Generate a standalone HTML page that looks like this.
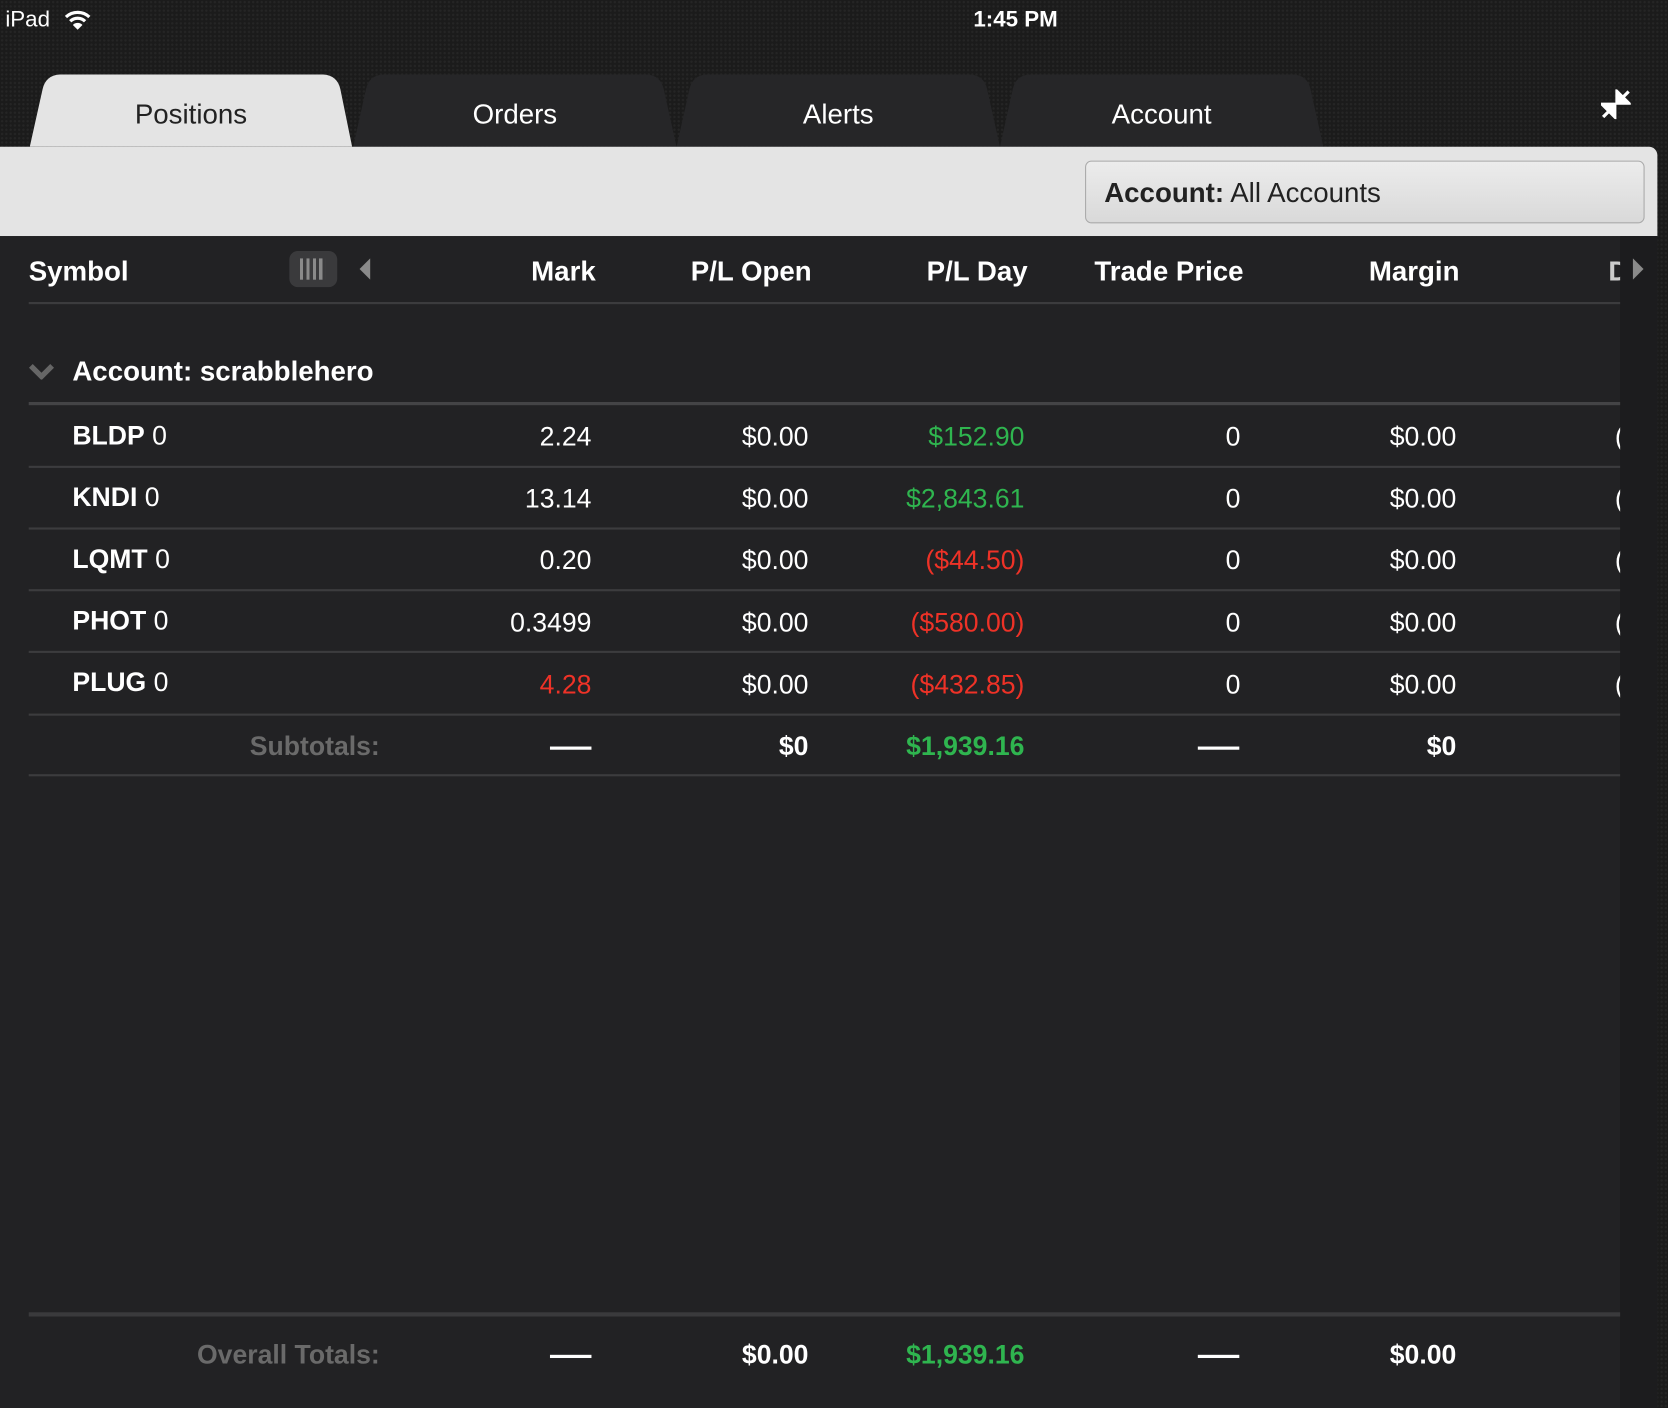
<!DOCTYPE html>
<html><head><meta charset="utf-8"><style>
html,body{margin:0;padding:0;width:1668px;height:1408px;overflow:hidden;background:#1a1a1a;}
#w{position:absolute;left:0;top:0;width:1568px;height:1324px;transform:scale(1.06378,1.06344);transform-origin:0 0;
font-family:"Liberation Sans",Arial,sans-serif;color:#fff;
background-color:#1b1b1b;background-image:radial-gradient(#252525 1px,transparent 1px);background-size:4px 4px;}
.a{position:absolute;white-space:nowrap;}
.tab{position:absolute;top:70px;height:68px;}
.tab svg{position:absolute;left:0;top:0}
.tab span{position:absolute;left:0;right:0;top:22px;text-align:center;font-size:26px;}
.r{position:absolute;text-align:right;white-space:nowrap;font-size:25px;}
.hd{font-weight:bold;font-size:26px;}
.line{position:absolute;left:27px;width:1496px;height:2px;background:#3c3c3e;}
.g{color:#2fb54f}.red{color:#ee3227}
</style></head><body><div id="w">
<div class="a" style="left:5px;top:7px;font-size:21px;">iPad</div>
<svg class="a" style="left:60px;top:9px" width="26" height="20" viewBox="0 0 26 20"><path d="M2 7 A16 16 0 0 1 24 7" stroke="#fff" stroke-width="3" fill="none"/><path d="M6 11 A10 10 0 0 1 20 11" stroke="#fff" stroke-width="3" fill="none"/><path d="M13 19 L8.5 14.5 A6 6 0 0 1 17.5 14.5 Z" fill="#fff"/></svg>
<div class="a" style="left:915px;top:7px;font-size:21px;font-weight:bold;">1:45 PM</div>

<div class="tab" style="left:28px;width:303px"><svg width="303" height="68"><path d="M0 68 L12 14 Q15 0 30 0 L274 0 Q289 0 292 14 L303 68 Z" fill="#e4e4e4"/></svg><span style="color:#222;">Positions</span></div>
<div class="tab" style="left:332px;width:304px"><svg width="304" height="68"><path d="M0 68 L12 14 Q15 0 30 0 L274 0 Q289 0 292 14 L304 68 Z" fill="#262628"/></svg><span>Orders</span></div>
<div class="tab" style="left:636px;width:304px"><svg width="304" height="68"><path d="M0 68 L12 14 Q15 0 30 0 L274 0 Q289 0 292 14 L304 68 Z" fill="#262628"/></svg><span>Alerts</span></div>
<div class="tab" style="left:940px;width:304px"><svg width="304" height="68"><path d="M0 68 L12 14 Q15 0 30 0 L274 0 Q289 0 292 14 L304 68 Z" fill="#262628"/></svg><span>Account</span></div>
<svg class="a" style="left:1505px;top:84px" width="28" height="28" viewBox="0 0 28 28"><path d="M26 2 L18 10 M15 2 L15 13 L26 13 Z" stroke="#fff" stroke-width="3" fill="#fff"/><path d="M2 26 L10 18 M1 14 L13 14 L13 26 Z" stroke="#fff" stroke-width="3" fill="#fff"/></svg>

<div class="a" style="left:0;top:138px;width:1558px;height:84px;background:#e4e4e4;border-top-right-radius:8px;"></div>
<div class="a" style="left:1020px;top:151px;width:524px;height:57px;border:1px solid #a9a9a9;border-radius:6px;background:linear-gradient(#ececec,#d9d9d9);"></div>
<div class="a" style="left:1038px;top:166px;font-size:26px;color:#222;"><b>Account:</b> All Accounts</div>

<div class="a" style="left:0;top:222px;width:1558px;height:1102px;background:#222224;"></div>
<div class="a" style="left:1523px;top:222px;width:35px;height:1102px;background:#1c1c1e;"></div>

<div class="a hd" style="left:27px;top:240px;">Symbol</div>
<div class="a" style="left:272px;top:236px;width:45px;height:34px;border-radius:8px;background:#3a3a3c;"></div>
<div class="a" style="left:282px;top:243px;width:24px;height:20px;background:repeating-linear-gradient(90deg,#8a8a8a 0 3px,transparent 3px 6px);"></div>
<svg class="a" style="left:336px;top:243px" width="14" height="20"><path d="M12 0 L2 10 L12 20 Z" fill="#8a8a8a"/></svg>
<div class="r hd" style="right:1008px;top:240px;">Mark</div>
<div class="r hd" style="right:805px;top:240px;">P/L Open</div>
<div class="r hd" style="right:602px;top:240px;">P/L Day</div>
<div class="r hd" style="right:399px;top:240px;">Trade Price</div>
<div class="r hd" style="right:196px;top:240px;">Margin</div>
<div class="a hd" style="left:1512px;top:240px;width:11px;overflow:hidden;color:#ccc;">D</div>
<svg class="a" style="left:1533px;top:243px" width="14" height="20"><path d="M2 0 L12 10 L2 20 Z" fill="#8a8a8a"/></svg>
<div class="line" style="top:284px;"></div>

<svg class="a" style="left:27px;top:341px" width="24" height="16"><path d="M2 3 L12 13 L22 3" stroke="#666" stroke-width="5" fill="none"/></svg>
<div class="a hd" style="left:68px;top:334px;">Account: scrabblehero</div>
<div class="line" style="top:378px;height:3px;background:#444446;"></div>

<div class="a" style="left:68px;top:396px;font-size:25px;"><b>BLDP</b> 0</div>
<div class="r" style="right:1012px;top:397px;">2.24</div><div class="r" style="right:808px;top:397px;">$0.00</div><div class="r g" style="right:605px;top:397px;">$152.90</div><div class="r" style="right:402px;top:397px;">0</div><div class="r" style="right:199px;top:397px;">$0.00</div><div class="a" style="left:1518px;top:397px;font-size:25px;width:5px;overflow:hidden;">(</div>
<div class="line" style="top:438px;"></div>
<div class="a" style="left:68px;top:454px;font-size:25px;"><b>KNDI</b> 0</div>
<div class="r" style="right:1012px;top:455px;">13.14</div><div class="r" style="right:808px;top:455px;">$0.00</div><div class="r g" style="right:605px;top:455px;">$2,843.61</div><div class="r" style="right:402px;top:455px;">0</div><div class="r" style="right:199px;top:455px;">$0.00</div><div class="a" style="left:1518px;top:455px;font-size:25px;width:5px;overflow:hidden;">(</div>
<div class="line" style="top:496px;"></div>
<div class="a" style="left:68px;top:512px;font-size:25px;"><b>LQMT</b> 0</div>
<div class="r" style="right:1012px;top:513px;">0.20</div><div class="r" style="right:808px;top:513px;">$0.00</div><div class="r red" style="right:605px;top:513px;">($44.50)</div><div class="r" style="right:402px;top:513px;">0</div><div class="r" style="right:199px;top:513px;">$0.00</div><div class="a" style="left:1518px;top:513px;font-size:25px;width:5px;overflow:hidden;">(</div>
<div class="line" style="top:554px;"></div>
<div class="a" style="left:68px;top:570px;font-size:25px;"><b>PHOT</b> 0</div>
<div class="r" style="right:1012px;top:572px;">0.3499</div><div class="r" style="right:808px;top:572px;">$0.00</div><div class="r red" style="right:605px;top:572px;">($580.00)</div><div class="r" style="right:402px;top:572px;">0</div><div class="r" style="right:199px;top:572px;">$0.00</div><div class="a" style="left:1518px;top:572px;font-size:25px;width:5px;overflow:hidden;">(</div>
<div class="line" style="top:612px;"></div>
<div class="a" style="left:68px;top:628px;font-size:25px;"><b>PLUG</b> 0</div>
<div class="r red" style="right:1012px;top:630px;">4.28</div><div class="r" style="right:808px;top:630px;">$0.00</div><div class="r red" style="right:605px;top:630px;">($432.85)</div><div class="r" style="right:402px;top:630px;">0</div><div class="r" style="right:199px;top:630px;">$0.00</div><div class="a" style="left:1518px;top:630px;font-size:25px;width:5px;overflow:hidden;">(</div>
<div class="line" style="top:671px;"></div>

<div class="r hd" style="right:1211px;top:688px;color:#6a6a6a;font-size:25px;">Subtotals:</div>
<div class="a" style="left:517px;top:702px;width:39px;height:3px;background:#fff;"></div>
<div class="r hd" style="right:808px;top:688px;font-size:25px;">$0</div>
<div class="r hd g" style="right:605px;top:688px;font-size:25px;">$1,939.16</div>
<div class="a" style="left:1126px;top:702px;width:39px;height:3px;background:#fff;"></div>
<div class="r hd" style="right:199px;top:688px;font-size:25px;">$0</div>
<div class="line" style="top:728px;"></div>

<div class="line" style="top:1234px;height:4px;background:#3a3a3c;"></div>
<div class="r hd" style="right:1211px;top:1260px;color:#6a6a6a;font-size:25px;">Overall Totals:</div>
<div class="a" style="left:517px;top:1274px;width:39px;height:3px;background:#fff;"></div>
<div class="r hd" style="right:808px;top:1260px;font-size:25px;">$0.00</div>
<div class="r hd g" style="right:605px;top:1260px;font-size:25px;">$1,939.16</div>
<div class="a" style="left:1126px;top:1274px;width:39px;height:3px;background:#fff;"></div>
<div class="r hd" style="right:199px;top:1260px;font-size:25px;">$0.00</div>
</div></body></html>
